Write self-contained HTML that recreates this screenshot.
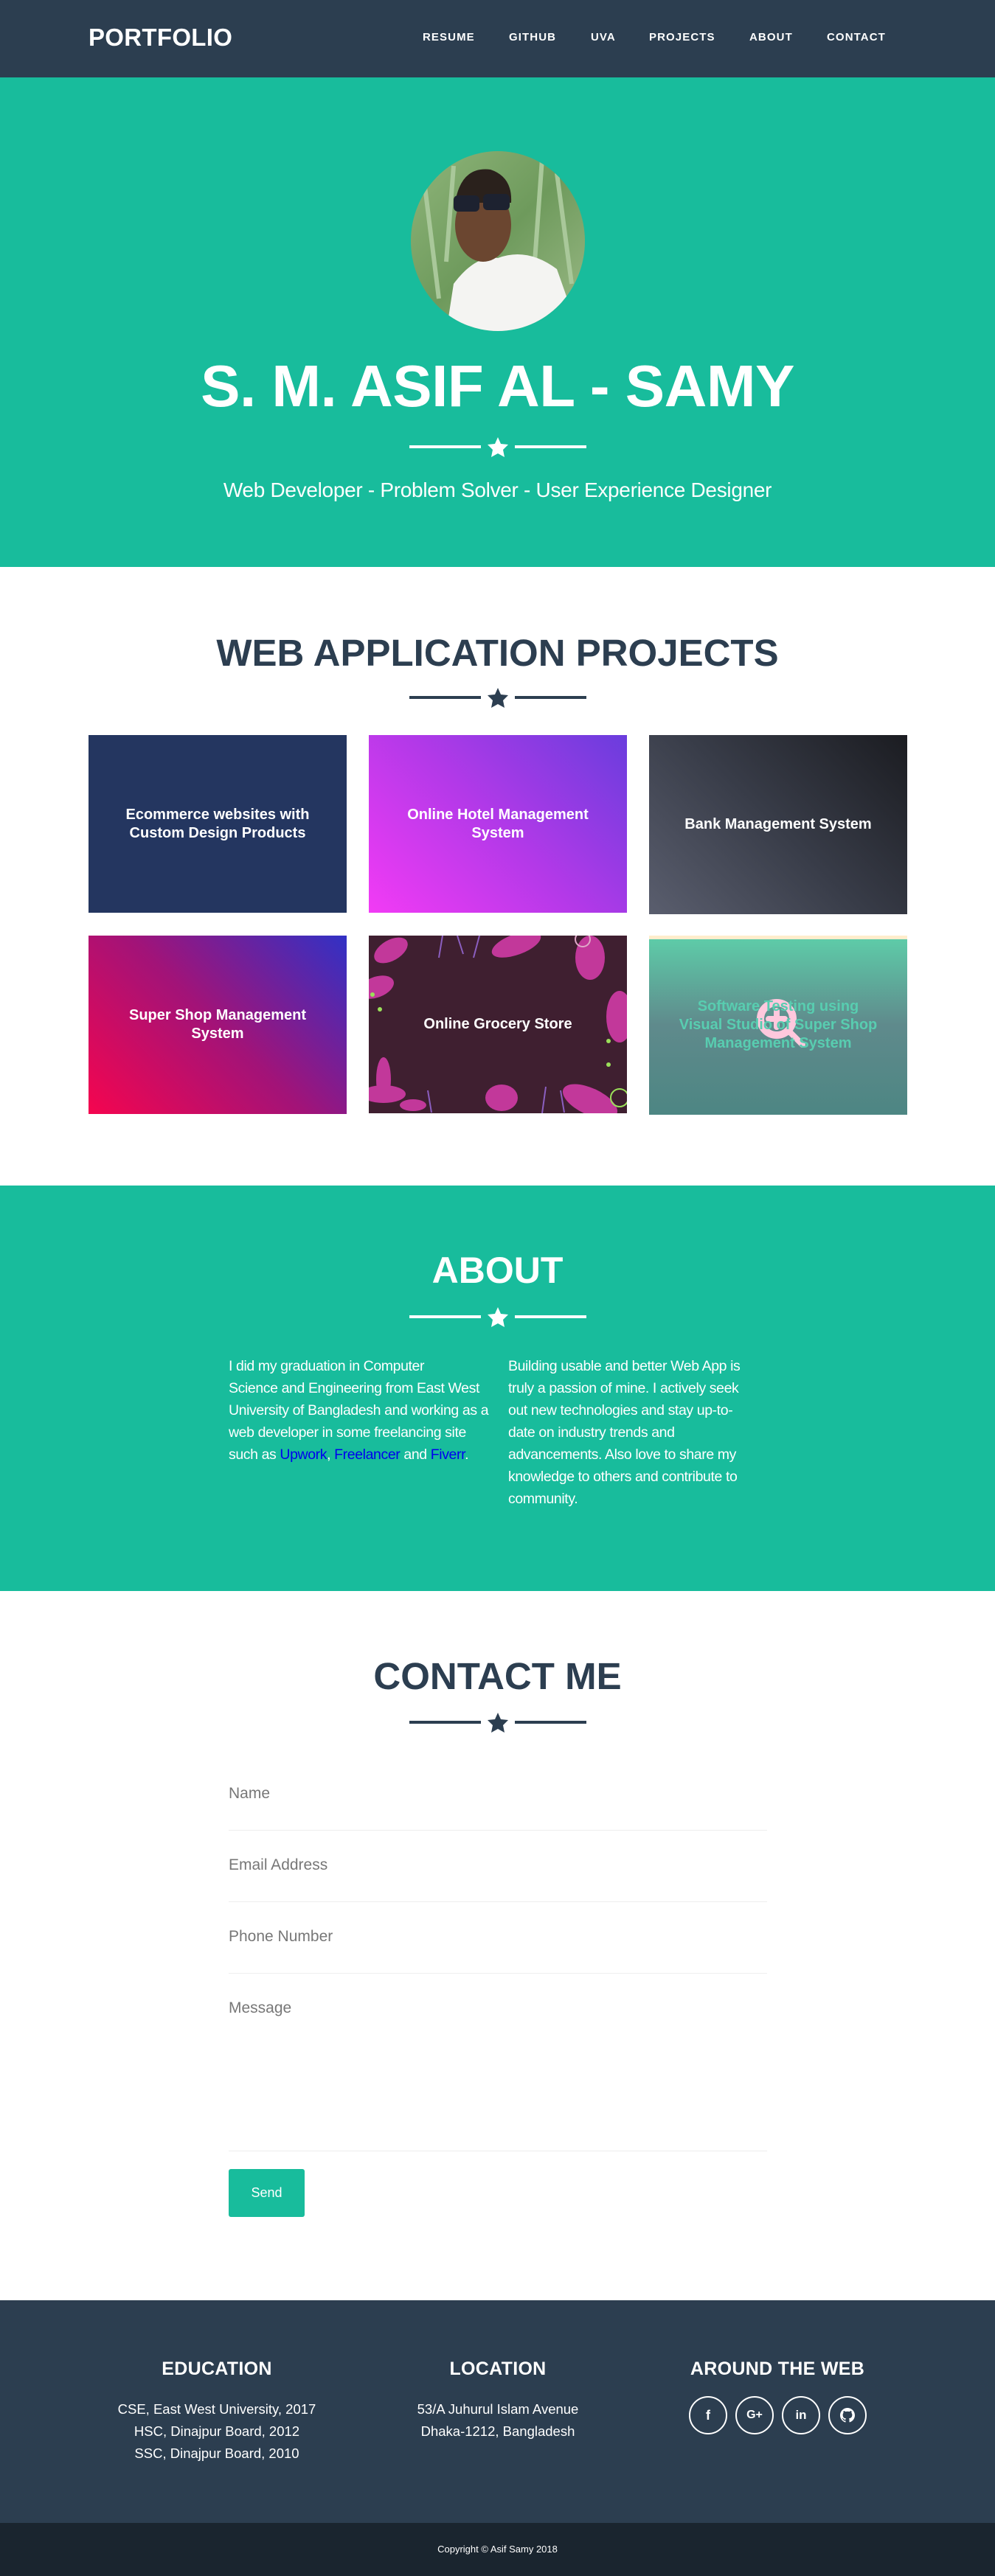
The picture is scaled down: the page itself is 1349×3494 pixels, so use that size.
<!DOCTYPE html>
<html><head><meta charset="utf-8">
<style>
*{margin:0;padding:0;box-sizing:border-box}
body{width:1349px;height:3494px;font-family:"Liberation Sans",sans-serif;background:#fff;position:relative;overflow:hidden}
.abs{position:absolute}
nav{position:absolute;left:0;top:0;width:1349px;height:105px;background:#2c3e50}
.brand{position:absolute;left:120px;top:32px;font-size:33px;font-weight:bold;color:#fff;letter-spacing:0.3px}
.nl{position:absolute;top:42px;font-size:15px;font-weight:bold;color:#fff;letter-spacing:1.1px}
.hero{position:absolute;left:0;top:105px;width:1349px;height:664px;background:#18bc9c}
.center{position:absolute;left:0;width:1349px;text-align:center}
.div{position:absolute;left:555px;width:240px;height:30px}
.card{position:absolute;width:350px;height:241px;display:flex;align-items:center;justify-content:center;text-align:center;color:#fff;font-weight:bold;font-size:20px;line-height:25px;padding:0 40px;overflow:hidden}
.about{position:absolute;left:0;top:1608px;width:1349px;height:550px;background:#18bc9c}
.p{position:absolute;top:1838px;color:#fff;font-size:19.5px;line-height:30px;letter-spacing:-0.4px}
.p a{color:#0000ee;text-decoration:none}
.fl{position:absolute;left:310px;width:730px;font-size:21px;color:#777;}
.ln{position:absolute;left:310px;width:730px;height:1px;background:#eee}
footer{position:absolute;left:0;top:3120px;width:1349px;height:302px;background:#2c3e50;color:#fff}
.fh{position:absolute;top:79px;width:400px;text-align:center;font-size:25px;font-weight:bold;letter-spacing:0.3px}
.ft{position:absolute;top:133px;width:400px;text-align:center;font-size:18.5px;line-height:30px}
.soc{position:absolute;top:130px;width:52px;height:52px;border:2px solid #fff;border-radius:50%;display:flex;align-items:center;justify-content:center;font-weight:bold;font-size:18px}
.bot{position:absolute;left:0;top:3422px;width:1349px;height:72px;background:#1a252f;color:#fff;font-size:13px;text-align:center;line-height:72px}
</style></head><body>
<nav>
<div class="brand">PORTFOLIO</div>
<div class="nl" style="left:573px">RESUME</div>
<div class="nl" style="left:690px">GITHUB</div>
<div class="nl" style="left:801px">UVA</div>
<div class="nl" style="left:880px">PROJECTS</div>
<div class="nl" style="left:1016px">ABOUT</div>
<div class="nl" style="left:1121px">CONTACT</div>
</nav>
<div class="hero"></div>
<svg class="abs" style="left:555px;top:205px" width="240" height="245" viewBox="0 0 240 245">
<defs><clipPath id="c"><ellipse cx="120" cy="122" rx="118" ry="122"/></clipPath>
<linearGradient id="g" x1="0" y1="0" x2="1" y2="1"><stop offset="0" stop-color="#8fb57a"/><stop offset="0.5" stop-color="#6e9a5c"/><stop offset="1" stop-color="#9dbb88"/></linearGradient></defs>
<g clip-path="url(#c)">
<rect width="240" height="245" fill="url(#g)"/>
<path d="M20 40 L40 200 M200 30 L220 180 M180 10 L170 150 M60 20 L50 150" stroke="#a9c89a" stroke-width="6"/>
<path d="M50 245 L60 180 Q90 140 120 145 Q160 130 200 160 L230 245 Z" fill="#f4f4f2"/>
<ellipse cx="100" cy="100" rx="38" ry="50" fill="#6b4630"/>
<path d="M62 70 Q70 20 110 25 Q140 35 138 70 Z" fill="#2a211c"/>
<rect x="60" y="60" width="35" height="22" rx="6" fill="#1d2230"/><rect x="100" y="58" width="36" height="22" rx="6" fill="#1d2230"/>
</g></svg>
<div class="center" style="top:478px;font-size:80px;font-weight:bold;color:#fff;letter-spacing:-0.5px">S. M. ASIF AL - SAMY</div>
<svg class="div" style="top:591px" viewBox="0 0 240 30"><path d="M0 15h97M143 15h97" stroke="#fff" stroke-width="4"/><path d="M120 2l4 9 10 1-7 7 2 10-9-5-9 5 2-10-7-7 10-1z" fill="#fff"/></svg>
<div class="center" style="top:649px;font-size:28px;color:#fff;letter-spacing:-0.3px">Web Developer - Problem Solver - User Experience Designer</div>

<div class="center" style="top:856px;font-size:51px;font-weight:bold;color:#2c3e50">WEB APPLICATION PROJECTS</div>
<svg class="div" style="top:931px" viewBox="0 0 240 30"><path d="M0 15h97M143 15h97" stroke="#2c3e50" stroke-width="4"/><path d="M120 2l4 9 10 1-7 7 2 10-9-5-9 5 2-10-7-7 10-1z" fill="#2c3e50"/></svg>

<div class="card" style="left:120px;top:997px;background:#243660">Ecommerce websites with Custom Design Products</div>
<div class="card" style="left:500px;top:997px;background:linear-gradient(45deg,#f23bf5,#b239e8 50%,#6a3ddd)">Online Hotel Management System</div>
<div class="card" style="left:880px;top:997px;height:243px;background:linear-gradient(45deg,#5a5e6e,#383c48 50%,#1b1c21)">Bank Management System</div>
<div class="card" style="left:120px;top:1269px;height:242px;background:linear-gradient(45deg,#f5054f,#a21378 50%,#3131c5)">Super Shop Management System</div>
<div class="card" style="left:500px;top:1269px;background:#3f1f30;">
<svg class="abs" style="left:0;top:0" width="350" height="241" viewBox="0 0 350 241">
<g fill="#c2389a"><ellipse cx="30" cy="20" rx="25" ry="14" transform="rotate(-30 30 20)"/><ellipse cx="200" cy="12" rx="35" ry="14" transform="rotate(-20 200 12)"/><ellipse cx="300" cy="30" rx="20" ry="30"/><ellipse cx="10" cy="70" rx="25" ry="14" transform="rotate(-20 10 70)"/><ellipse cx="340" cy="110" rx="18" ry="35"/><ellipse cx="20" cy="215" rx="30" ry="12"/><ellipse cx="20" cy="195" rx="10" ry="30"/><ellipse cx="180" cy="220" rx="22" ry="18"/><ellipse cx="300" cy="225" rx="40" ry="18" transform="rotate(25 300 225)"/><ellipse cx="60" cy="230" rx="18" ry="8"/></g>
<g stroke="#8b5fc0" stroke-width="2" fill="none"><path d="M100 0 l-5 30 M120 0 l8 25 M150 0 l-8 30 M80 210 l5 30 M240 205 l-5 36 M260 210 l5 30"/><circle cx="290" cy="5" r="10" stroke="#e0a8c8"/></g>
<g fill="#9be05a"><circle cx="5" cy="80" r="3"/><circle cx="15" cy="100" r="3"/><circle cx="325" cy="143" r="3"/><circle cx="325" cy="175" r="3"/></g>
<circle cx="340" cy="220" r="12" stroke="#9be05a" stroke-width="2" fill="none"/>
</svg><span style="position:relative">Online Grocery Store</span></div>
<div class="card" style="left:880px;top:1269px;height:243px;background:linear-gradient(#ffedcc 0,#ffedcc 5px,#5ecba8 5px,#5f8a8c 50%,#4d8683);color:#58cdb0">
<svg class="abs" style="left:140px;top:80px" width="80" height="80" viewBox="0 0 80 80"><circle cx="33" cy="33" r="22" stroke="#ffc8dd" stroke-width="10" fill="none"/><path d="M50 50l18 18M33 22v22M22 33h22" stroke="#ffc8dd" stroke-width="8" stroke-linecap="round"/></svg>
<span style="position:relative">Software Testing using Visual Studio of Super Shop Management System</span></div>

<div class="about"></div>
<div class="center" style="top:1694px;font-size:50px;font-weight:bold;color:#fff">ABOUT</div>
<svg class="div" style="top:1771px" viewBox="0 0 240 30"><path d="M0 15h97M143 15h97" stroke="#fff" stroke-width="4"/><path d="M120 2l4 9 10 1-7 7 2 10-9-5-9 5 2-10-7-7 10-1z" fill="#fff"/></svg>
<div class="p" style="left:310px;width:360px">I did my graduation in Computer<br>Science and Engineering from East West University of Bangladesh and working as a web developer in some freelancing site such as <a>Upwork</a>, <a>Freelancer</a> and <a>Fiverr</a>.</div>
<div class="p" style="left:689px;width:340px">Building usable and better Web App is truly a passion of mine. I actively seek out new technologies and stay up-to-date on industry trends and advancements. Also love to share my knowledge to others and contribute to community.</div>

<div class="center" style="top:2244px;font-size:51px;font-weight:bold;color:#2c3e50">CONTACT ME</div>
<svg class="div" style="top:2321px" viewBox="0 0 240 30"><path d="M0 15h97M143 15h97" stroke="#2c3e50" stroke-width="4"/><path d="M120 2l4 9 10 1-7 7 2 10-9-5-9 5 2-10-7-7 10-1z" fill="#2c3e50"/></svg>
<div class="fl" style="top:2421px">Name</div><div class="ln" style="top:2482px"></div>
<div class="fl" style="top:2518px">Email Address</div><div class="ln" style="top:2579px"></div>
<div class="fl" style="top:2615px">Phone Number</div><div class="ln" style="top:2676px"></div>
<div class="fl" style="top:2712px">Message</div><div class="ln" style="top:2917px"></div>
<div class="abs" style="left:310px;top:2942px;width:103px;height:65px;background:#18bc9c;border-radius:3px;color:#fff;font-size:18px;text-align:center;line-height:65px">Send</div>

<footer>
<div class="fh" style="left:94px">EDUCATION</div>
<div class="ft" style="left:94px">CSE, East West University, 2017<br>HSC, Dinajpur Board, 2012<br>SSC, Dinajpur Board, 2010</div>
<div class="fh" style="left:475px">LOCATION</div>
<div class="ft" style="left:475px">53/A Juhurul Islam Avenue<br>Dhaka-1212, Bangladesh</div>
<div class="fh" style="left:854px">AROUND THE WEB</div>
<div class="soc" style="left:934px">f</div>
<div class="soc" style="left:997px;font-size:16px">G+</div>
<div class="soc" style="left:1060px;font-size:17px">in</div>
<div class="soc" style="left:1123px"><svg width="20" height="20" viewBox="0 0 16 16"><path fill="#fff" d="M8 0C3.6 0 0 3.6 0 8c0 3.5 2.3 6.5 5.5 7.6.4.1.5-.2.5-.4v-1.4c-2.2.5-2.7-1-2.7-1-.4-.9-.9-1.2-.9-1.2-.7-.5.1-.5.1-.5.8.1 1.2.8 1.2.8.7 1.2 1.9.9 2.3.7.1-.5.3-.9.5-1.1-1.8-.2-3.6-.9-3.6-4 0-.9.3-1.6.8-2.1-.1-.2-.4-1 .1-2.1 0 0 .7-.2 2.2.8.6-.2 1.3-.3 2-.3s1.4.1 2 .3c1.5-1 2.2-.8 2.2-.8.4 1.1.2 1.9.1 2.1.5.6.8 1.3.8 2.1 0 3.1-1.9 3.7-3.6 3.9.3.3.5.8.5 1.5v2.2c0 .2.1.5.6.4C13.7 14.5 16 11.5 16 8c0-4.4-3.6-8-8-8z"/></svg></div>
</footer>
<div class="bot">Copyright © Asif Samy 2018</div>
</body></html>
